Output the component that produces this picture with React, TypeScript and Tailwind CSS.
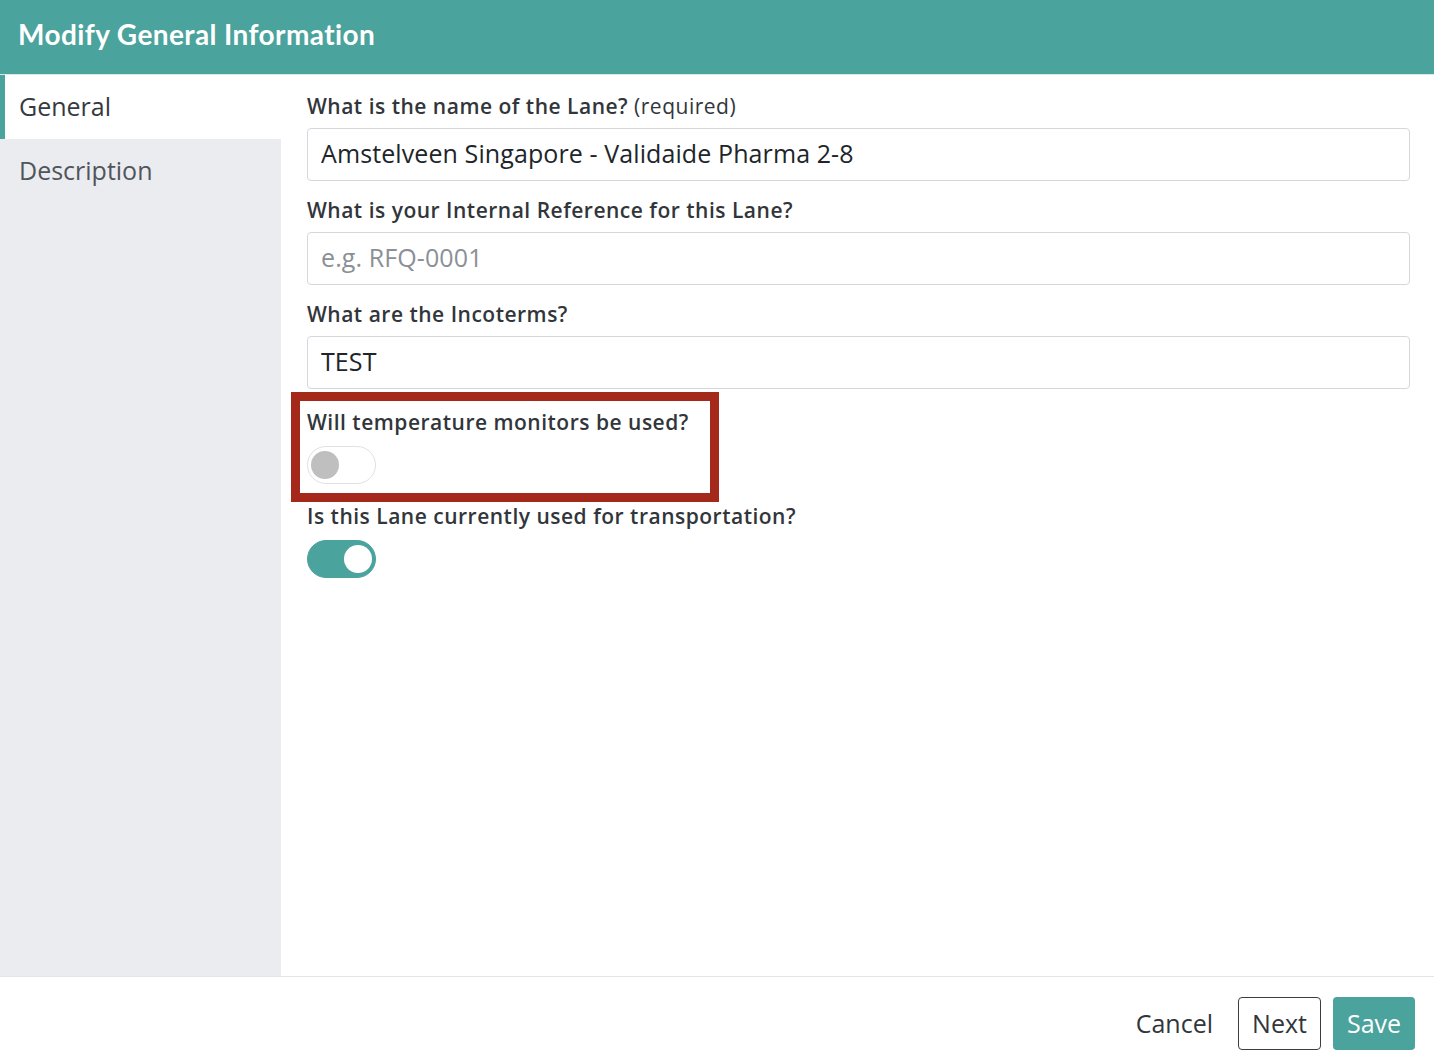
import { useState } from "react";

const label = "text-[21px] font-semibold leading-[28px] tracking-[0.5px] text-[#32363b]";
const input =
  "block w-full h-[53px] rounded-[4px] border border-[#d4d7db] bg-white px-[13px] pb-[4px] text-[25px] tracking-[0.1px] text-[#212529] placeholder:text-[#8a9096] outline-none";

function Toggle({ on, onClick }: { on: boolean; onClick: () => void }) {
  return (
    <button
      type="button"
      onClick={onClick}
      className={`flex h-[38px] w-[69px] items-center rounded-full border px-[3px] ${
        on ? "justify-end border-[#4aa39c] bg-[#4aa39c]" : "justify-start border-[#dfe1e4] bg-white"
      }`}
    >
      <span className={`h-[28px] w-[28px] rounded-full ${on ? "bg-white" : "bg-[#bfbfbf]"}`} />
    </button>
  );
}

export default function App() {
  const [monitors, setMonitors] = useState(false);
  const [active, setActive] = useState(true);

  return (
    <div className="flex h-[1064px] w-[1434px] flex-col bg-white font-['Open_Sans',sans-serif] text-[#32363b]">
      <div className="flex h-[75px] shrink-0 items-center border-b border-[#d9e9e7] bg-[#4aa39c] px-[18px] pb-[6px]">
        <h1 className="font-['Lato',sans-serif] text-[28px] font-bold tracking-[0.4px] text-white">
          Modify General Information
        </h1>
      </div>

      <div className="flex min-h-0 flex-1">
        {/* sidebar */}
        <div className="w-[281px] shrink-0 bg-[#ebecef]">
          <div className="flex h-[64px] items-center border-l-[5px] border-[#4aa39c] bg-white pl-[14px] text-[25px] text-[#363a40]">
            General
          </div>
          <div className="flex h-[64px] items-center pl-[19px] text-[25px] text-[#4f555b]">
            Description
          </div>
        </div>

        {/* form */}
        <div className="flex-1 pl-[26px] pr-[24px] pt-[17px]">
          <div className={label}>
            What is the name of the Lane? <span className="font-normal">(required)</span>
          </div>
          <input className={`${input} mt-[8px]`} defaultValue="Amstelveen Singapore - Validaide Pharma 2-8" />

          <div className={`${label} mt-[15px]`}>What is your Internal Reference for this Lane?</div>
          <input className={`${input} mt-[8px]`} placeholder="e.g. RFQ-0001" />

          <div className={`${label} mt-[15px]`}>What are the Incoterms?</div>
          <input className={`${input} mt-[8px]`} defaultValue="TEST" />

          <div className="relative mt-[19px]">
            <div className={label}>Will temperature monitors be used?</div>
            <div className="mt-[10px]">
              <Toggle on={monitors} onClick={() => setMonitors(!monitors)} />
            </div>
            {/* highlight annotation */}
            <div className="pointer-events-none absolute left-[-16px] top-[-16px] h-[110px] w-[428px] border-[9px] border-[#a5291a]" />
          </div>

          <div className={`${label} mt-[18px]`}>Is this Lane currently used for transportation?</div>
          <div className="mt-[10px]">
            <Toggle on={active} onClick={() => setActive(!active)} />
          </div>
        </div>
      </div>

      <div className="flex h-[88px] shrink-0 items-start justify-end gap-[12px] border-t border-[#e3e5e8] pr-[19px] pt-[20px]">
        <button type="button" className="h-[53px] px-[13px] text-[25px] text-[#32363b]">
          Cancel
        </button>
        <button
          type="button"
          className="h-[53px] w-[83px] rounded-[4px] border border-[#3a3d42] bg-white text-[25px] text-[#32363b]"
        >
          Next
        </button>
        <button type="button" className="h-[53px] w-[82px] rounded-[4px] bg-[#4aa39c] text-[25px] text-white">
          Save
        </button>
      </div>
    </div>
  );
}
